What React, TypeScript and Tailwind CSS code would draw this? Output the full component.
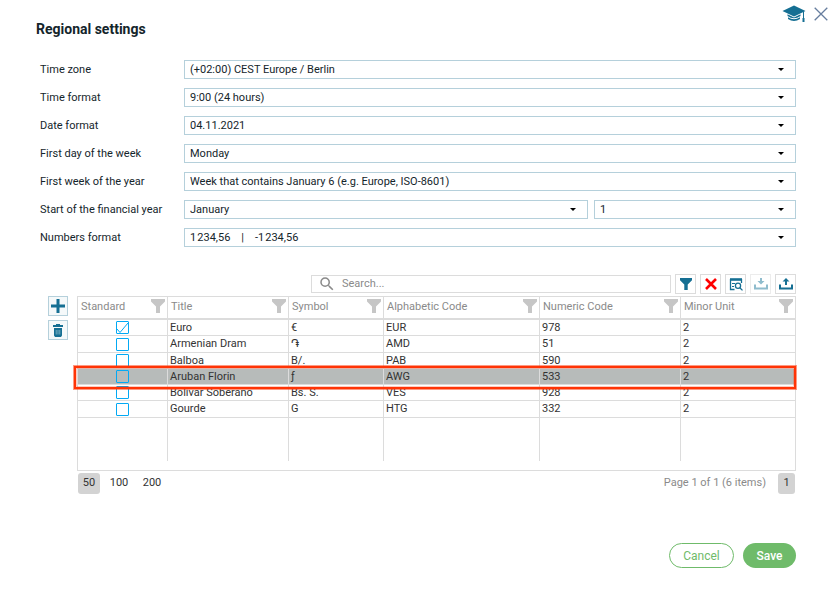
import React from "react";
import { MdSearch } from "react-icons/md";

type Option = {
  id: string;
  label: string;
  value: string;
};

type Currency = {
  standard: boolean;
  title: string;
  symbol: string;
  alpha: string;
  numeric: string;
  minor: string;
};

const options: Option[] = [
  { id: "timezone", label: "Time zone", value: "(+02:00) CEST Europe / Berlin" },
  { id: "timeformat", label: "Time format", value: "9:00 (24 hours)" },
  { id: "dateformat", label: "Date format", value: "04.11.2021" },
  { id: "firstday", label: "First day of the week", value: "Monday" },
  {
    id: "firstweek",
    label: "First week of the year",
    value: "Week that contains January 6 (e.g. Europe, ISO-8601)",
  },
];

const currencies: Currency[] = [
  { standard: true, title: "Euro", symbol: "€", alpha: "EUR", numeric: "978", minor: "2" },
  { standard: false, title: "Armenian Dram", symbol: "֏", alpha: "AMD", numeric: "51", minor: "2" },
  { standard: false, title: "Balboa", symbol: "B/.", alpha: "PAB", numeric: "590", minor: "2" },
  { standard: false, title: "Aruban Florin", symbol: "ƒ", alpha: "AWG", numeric: "533", minor: "2" },
  { standard: false, title: "Bolívar Soberano", symbol: "Bs. S.", alpha: "VES", numeric: "928", minor: "2" },
  { standard: false, title: "Gourde", symbol: "G", alpha: "HTG", numeric: "332", minor: "2" },
];

const columns = [
  { name: "Standard", width: "w-[90px]" },
  { name: "Title", width: "w-[121px]" },
  { name: "Symbol", width: "w-[95px]" },
  { name: "Alphabetic Code", width: "w-[156px]" },
  { name: "Numeric Code", width: "w-[141px]" },
  { name: "Minor Unit", width: "" },
];

const Funnel = ({ className }: { className: string }) => (
  <svg viewBox="0 0 14 14" className={className} fill="currentColor" aria-hidden="true">
    <path d="M0 0h14v2.5L9 7.5V14H5V7.5L0 2.5z" />
  </svg>
);

const SelectBox = ({
  id,
  value,
  label,
  className = "",
}: {
  id: string;
  value: string;
  label?: string;
  className?: string;
}) => (
  <div className={`relative ${className}`}>
    <select
      id={id}
      aria-label={label}
      defaultValue={value}
      className="block h-[19px] w-full appearance-none whitespace-pre border border-[#b5d0db] bg-white pl-[5px] pr-6 text-[11px] leading-4 text-[#14252b] outline-none"
    >
      <option value={value}>{value}</option>
    </select>
    <svg
      viewBox="0 0 6 3"
      className="pointer-events-none absolute right-3 top-2 h-[3px] w-[6px]"
      aria-hidden="true"
    >
      <path d="M0 0h6L3 3z" fill="#000" />
    </svg>
  </div>
);

const ToolButton = ({
  label,
  disabled,
  children,
}: {
  label: string;
  disabled?: boolean;
  children: React.ReactNode;
}) => (
  <button
    type="button"
    aria-label={label}
    disabled={disabled}
    className="flex h-5 w-[21px] items-center justify-center border border-[#dcdcdc] bg-white text-[#156f93] disabled:border-[#ececec] disabled:text-[#8fbccd]"
  >
    {children}
  </button>
);

const TopIcons = () => (
  <div className="flex h-5 items-start justify-end gap-2 pr-[6px] pt-[5px]">
    <a href="#help" aria-label="Help" className="text-[#156f93]">
      <svg viewBox="0 0 24 18" className="h-[18px] w-6" fill="currentColor">
        <path d="M12 0.5L23.5 6 12 11.5 0.5 6z" />
        <path d="M5.5 9.2l6.5 3.2 6.5-3.2v1.9q-6.500 4.400-13 0z" />
        <path d="M6 12.300q6 3.900 12 0v1.800q-6 4-12 0z" />
        <path d="M21 6.500h1v6.500h-1zM20.500 13h2v4h-2z" />
      </svg>
    </a>
    <button type="button" aria-label="Close" className="pt-[2px] text-[#667d9e]">
      <svg viewBox="0 0 14 14" className="size-[14px]" fill="none" stroke="currentColor" strokeWidth="1.3">
        <path d="M0.700 0.700l12.600 12.600M13.300 0.700L0.700 13.300" />
      </svg>
    </button>
  </div>
);

const Toolbar = () => (
  <div className="flex items-center justify-end gap-1 pl-[263px]">
    <label className="flex h-[18px] flex-1 items-center border border-[#dcdcdc] pl-[6px]">
      <MdSearch className="size-[18px] shrink-0 text-[#8a8a8a]" />
      <input
        type="text"
        aria-label="Search"
        placeholder="Search..."
        className="w-full pl-[6px] text-[11px] outline-none placeholder:text-[#8a8a8a]"
      />
    </label>
    <ToolButton label="Filter">
      <Funnel className="size-3" />
    </ToolButton>
    <ToolButton label="Clear filter">
      <svg viewBox="0 0 12 12" className="size-3" stroke="#f00" strokeWidth="2.600">
        <path d="M1 1l10 10M11 1L1 11" />
      </svg>
    </ToolButton>
    <ToolButton label="Search in table">
      <svg viewBox="0 0 14 14" className="size-[14px]" fill="none" stroke="currentColor" strokeWidth="1.300">
        <path d="M5.500 12.500H1.500V2M12.500 2v4" />
        <path d="M1 2.500h12" strokeWidth="2.600" />
        <path d="M3 6.500h3M3 9.500h2" strokeWidth="1" />
        <circle cx="9" cy="8.800" r="2.600" />
        <path d="M10.800 10.700l2.700 2.700" />
      </svg>
    </ToolButton>
    <ToolButton label="Import" disabled>
      <svg viewBox="0 0 14 12" className="h-3 w-[14px]" fill="currentColor">
        <path d="M6 0h2v3h2.500L7 6.500 3.500 3H6zM0 6.500h2v3h10v-3h2v5H0z" />
      </svg>
    </ToolButton>
    <ToolButton label="Export">
      <svg viewBox="0 0 14 12" className="h-3 w-[14px]" fill="currentColor">
        <path d="M6 7h2V3.500h2.500L7 0 3.500 3.500H6zM0 6.500h2v3h10v-3h2v5H0z" />
      </svg>
    </ToolButton>
  </div>
);

const CurrencyTable = () => (
  <div className="border border-[#dcdcdc] pb-[9px]">
    <table className="w-full table-fixed border-separate border-spacing-0 text-[11px] leading-[14px] text-[#333]">
      <thead>
        <tr className="h-[23px]">
          {columns.map((col) => (
            <th
              key={col.name}
              className={`border-b-2 border-r border-[#dcdcdc] p-0 pl-[3px] text-left align-top font-normal text-[#8a8a8a] last:border-r-0 ${col.width}`}
            >
              <div className="flex items-start justify-between pr-[2px] pt-[2px]">
                <span className="leading-4">{col.name}</span>
                <Funnel className="size-[14px] text-[#c6c6c6]" />
              </div>
            </th>
          ))}
        </tr>
      </thead>
      <tbody>
        {currencies.map((row) => (
          <tr
            key={row.alpha}
            className={`h-4 [&:nth-child(4n+2)]:h-[17px] [&>td]:border-b [&>td]:border-r [&>td]:border-[#dcdcdc] [&>td]:p-0 [&>td]:pl-[2px] [&>td:first-child]:pl-0 [&>td:last-child]:border-r-0 ${
              row.alpha === "AWG" ? "bg-[#b7bbba]" : ""
            }`}
          >
            <td>
              <input
                type="checkbox"
                aria-label={`${row.title} standard`}
                defaultChecked={row.standard}
                className="peer sr-only"
              />
              <svg
                viewBox="0 0 13 13"
                className="mx-auto size-[13px] text-transparent peer-checked:text-[#03a9f4]"
                fill="none"
                aria-hidden="true"
              >
                <rect x="0.500" y="0.500" width="12" height="12" rx="0.500" stroke="#03a9f4" />
                <path d="M1 8l3 3.500 8-9.500" stroke="currentColor" />
              </svg>
            </td>
            <td>{row.title}</td>
            <td>{row.symbol}</td>
            <td>{row.alpha}</td>
            <td>{row.numeric}</td>
            <td>{row.minor}</td>
          </tr>
        ))}
        {/* empty space below the rows */}
        <tr className="h-[43px]">
          {columns.map((col) => (
            <td key={col.name} className="border-r border-[#dcdcdc] last:border-r-0" />
          ))}
        </tr>
      </tbody>
    </table>
  </div>
);

const Pager = () => (
  <div className="mt-[2px] flex items-center justify-between pl-px text-[11px] text-[#333]">
    <div className="flex gap-[5px]">
      <button type="button" className="h-[21px] w-[22px] rounded-[3px] bg-[#d3d3d3]">
        50
      </button>
      <button type="button" className="h-[21px] w-7">
        100
      </button>
      <button type="button" className="h-[21px] w-7">
        200
      </button>
    </div>
    <div className="flex items-center gap-3 pr-px">
      <span className="text-[#8a8a8a]">Page 1 of 1 (6 items)</span>
      <button type="button" className="h-[21px] w-[17px] rounded-[3px] bg-[#d3d3d3]">
        1
      </button>
    </div>
  </div>
);

const App: React.FC = () => {
  return (
    <div className="min-h-screen bg-white font-['Roboto',sans-serif] text-[#14252b]">
      <TopIcons />
      <form className="pl-[35px] pr-[38px]">
        <h1 className="pl-px text-sm font-bold leading-[18px]">Regional settings</h1>

        <div className="mt-[22px] flex flex-col gap-[9px] pl-[5px] text-[11px] leading-[19px]">
          {options.map((option) => (
            <div key={option.id} className="flex">
              <label htmlFor={option.id} className="w-36 shrink-0">
                {option.label}
              </label>
              <SelectBox id={option.id} value={option.value} className="flex-1" />
            </div>
          ))}
          <div className="flex">
            <label htmlFor="month" className="w-36 shrink-0">
              Start of the financial year
            </label>
            <div className="grid flex-1 grid-cols-[2fr_1fr] gap-[6px]">
              <SelectBox id="month" value="January" />
              <SelectBox id="day" value="1" label="Day" />
            </div>
          </div>
          <div className="flex">
            <label htmlFor="numbers" className="w-36 shrink-0">
              Numbers format
            </label>
            <SelectBox
              id="numbers"
              value={"1\u200a234,56\u00a0\u00a0\u00a0\u00a0|\u00a0\u00a0\u00a0\u00a0-1\u200a234,56"}
              className="flex-1"
            />
          </div>
        </div>

        <div className="mt-[27px] flex gap-[9px] pl-[13px]">
          <div className="flex flex-col gap-1 pt-[22px]">
            <button
              type="button"
              aria-label="Add"
              className="flex size-5 items-center justify-center border border-[#b5d0db] bg-[#f5f9fa] text-[#156f93]"
            >
              <svg viewBox="0 0 14 14" className="size-[14px]" fill="currentColor">
                <path d="M5.500 0h3v5.500H14v3H8.500V14h-3V8.500H0v-3h5.500z" />
              </svg>
            </button>
            <button
              type="button"
              aria-label="Delete"
              className="flex size-5 items-center justify-center border border-[#b5d0db] bg-[#f5f9fa] text-[#156f93]"
            >
              <svg viewBox="0 0 10 13" className="h-[13px] w-[10px]" fill="currentColor">
                <path d="M3 0h4v1h3v2H0V1h3zM1 4h8v7.500L8 13H2l-1-1.500z" />
                <path d="M3.200 6v4.500M5 6v4.500M6.800 6v4.500" stroke="#8fbccd" strokeWidth="0.800" />
              </svg>
            </button>
          </div>
          <div className="min-w-0 flex-1">
            <div className="-ml-[29px]">
              <Toolbar />
            </div>
            <div className="relative mt-[2px]">
              <CurrencyTable />
              {/* frame around the selected row */}
              <div className="pointer-events-none absolute -left-[3px] right-0 top-[70px] h-[23px] border-2 border-[#ff3406] shadow-[inset_0_0_0_1px_#ff340640] outline-1 outline-[#ff340680]" />
            </div>
            <Pager />
          </div>
        </div>

        <div className="mt-[49px] flex justify-end gap-[9px] text-xs">
          <button
            type="button"
            className="h-[25px] w-[65px] rounded-full border border-[#6fbb6a] text-[#6fbb6a]"
          >
            Cancel
          </button>
          <button type="submit" className="h-[25px] w-[53px] rounded-full bg-[#6fbb6a] font-medium text-white">
            Save
          </button>
        </div>
      </form>
    </div>
  );
};

export default App;
